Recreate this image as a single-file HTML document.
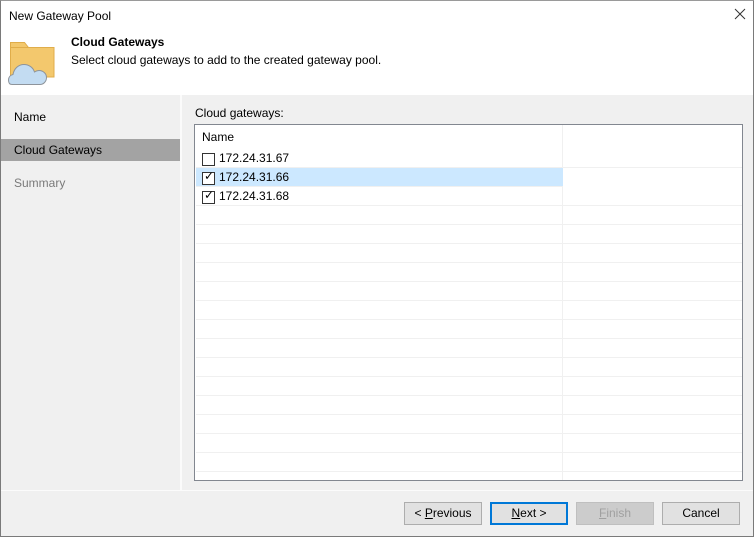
<!DOCTYPE html>
<html><head><style>
*{margin:0;padding:0;box-sizing:border-box}
body{width:754px;height:537px;overflow:hidden;font-family:"Segoe UI","Liberation Sans",sans-serif;font-size:12px;color:#000;background:#f0f0f0;position:relative}
.win{position:absolute;left:0;top:0;width:754px;height:537px;border:1px solid #7a7a7a;border-top-color:#9a9a9a}
.abs{position:absolute}
.btn{position:absolute;top:501px;width:78px;height:23px;border:1px solid #adadad;background:#e1e1e1;text-align:center;line-height:21px;font-size:12px}
.row{position:absolute;left:1px;width:546px;height:19px;border-bottom:1px solid #f0f0f0}
.cb{position:absolute;left:6px;top:4px;width:13px;height:13px;border:1px solid #333;background:#fff}
.ip{position:absolute;left:23px;top:2px}
</style></head><body>
<div class="win">
<div class="abs" style="left:0;top:0;width:752px;height:94px;background:#fff"></div>
<div class="abs" style="left:8px;top:8px;font-size:12px">New Gateway Pool</div>
<svg class="abs" style="left:733px;top:7px" width="12" height="12" viewBox="0 0 12 12"><path d="M1 1L11 11M11 1L1 11" stroke="#333" stroke-width="1"/></svg>
<svg class="abs" style="left:0;top:30px" width="60" height="60" viewBox="0 30 60 60">
<path d="M9.5 41.5h14l4 5h25.5v29.5H9.5z" fill="#f3c86d" stroke="#e0ad4a" stroke-width="1"/>
<path d="M9.5 46.5h17.5" stroke="#e0ad4a" stroke-width="1"/>
<path d="M11 83.5c-2.5 0-3.5-2-3.5-4.5 0-3 2-5 4.5-5.5 1-6 5.5-10 11-10 5 0 9 3 10.5 7.5 1.5-1 3-1.5 4.5-1.5 4 0 7.5 3 7.5 7 0 4-3 7-6.5 7z" fill="#c3dcf2" stroke="#8e949b" stroke-width="1"/>
</svg>
<div class="abs" style="left:70px;top:34px;font-weight:bold">Cloud Gateways</div>
<div class="abs" style="left:70px;top:52px">Select cloud gateways to add to the created gateway pool.</div>
<div class="abs" style="left:0;top:94px;width:179px;height:395px;background:#f0f0f0"></div>
<div class="abs" style="left:179px;top:94px;width:2px;height:395px;background:#fbfbfb"></div>
<div class="abs" style="left:13px;top:109px">Name</div>
<div class="abs" style="left:0;top:138px;width:179px;height:22px;background:#a3a3a3"></div>
<div class="abs" style="left:13px;top:142px">Cloud Gateways</div>
<div class="abs" style="left:13px;top:175px;color:#7a7a7a">Summary</div>
<div class="abs" style="left:194px;top:105px">Cloud gateways:</div>
<div class="abs" style="left:193px;top:123px;width:549px;height:357px;border:1px solid #828790;background:#fff;overflow:hidden">
<div class="abs" style="left:367px;top:0;width:1px;height:357px;background:#f0f0f0"></div>
<div class="abs" style="left:7px;top:5px">Name</div>
<div class="row" style="top:24px"><div class="cb"></div><div class="ip">172.24.31.67</div></div>
<div class="row" style="top:43px;width:367px;background:#cce8ff"><div class="cb"></div><div class="ip">172.24.31.66</div><div class="abs" style="left:8px;top:1px;font-size:12px">✓</div></div>
<div class="row" style="top:62px"><div class="cb"></div><div class="ip">172.24.31.68</div><div class="abs" style="left:8px;top:1px">✓</div></div>
<div class="row" style="top:81px"></div><div class="row" style="top:100px"></div><div class="row" style="top:119px"></div><div class="row" style="top:138px"></div><div class="row" style="top:157px"></div><div class="row" style="top:176px"></div><div class="row" style="top:195px"></div><div class="row" style="top:214px"></div><div class="row" style="top:233px"></div><div class="row" style="top:252px"></div><div class="row" style="top:271px"></div><div class="row" style="top:290px"></div><div class="row" style="top:309px"></div><div class="row" style="top:328px"></div>
</div>
<div class="abs" style="left:0;top:489px;width:752px;height:1px;background:#fbfbfb"></div>
<div class="btn" style="left:403px">&lt; <u>P</u>revious</div>
<div class="btn" style="left:489px;border:2px solid #0078d7;line-height:19px"><u>N</u>ext &gt;</div>
<div class="btn" style="left:575px;background:#cccccc;border-color:#bfbfbf;color:#a0a0a0"><u>F</u>inish</div>
<div class="btn" style="left:661px">Cancel</div>
</div>
</body></html>
